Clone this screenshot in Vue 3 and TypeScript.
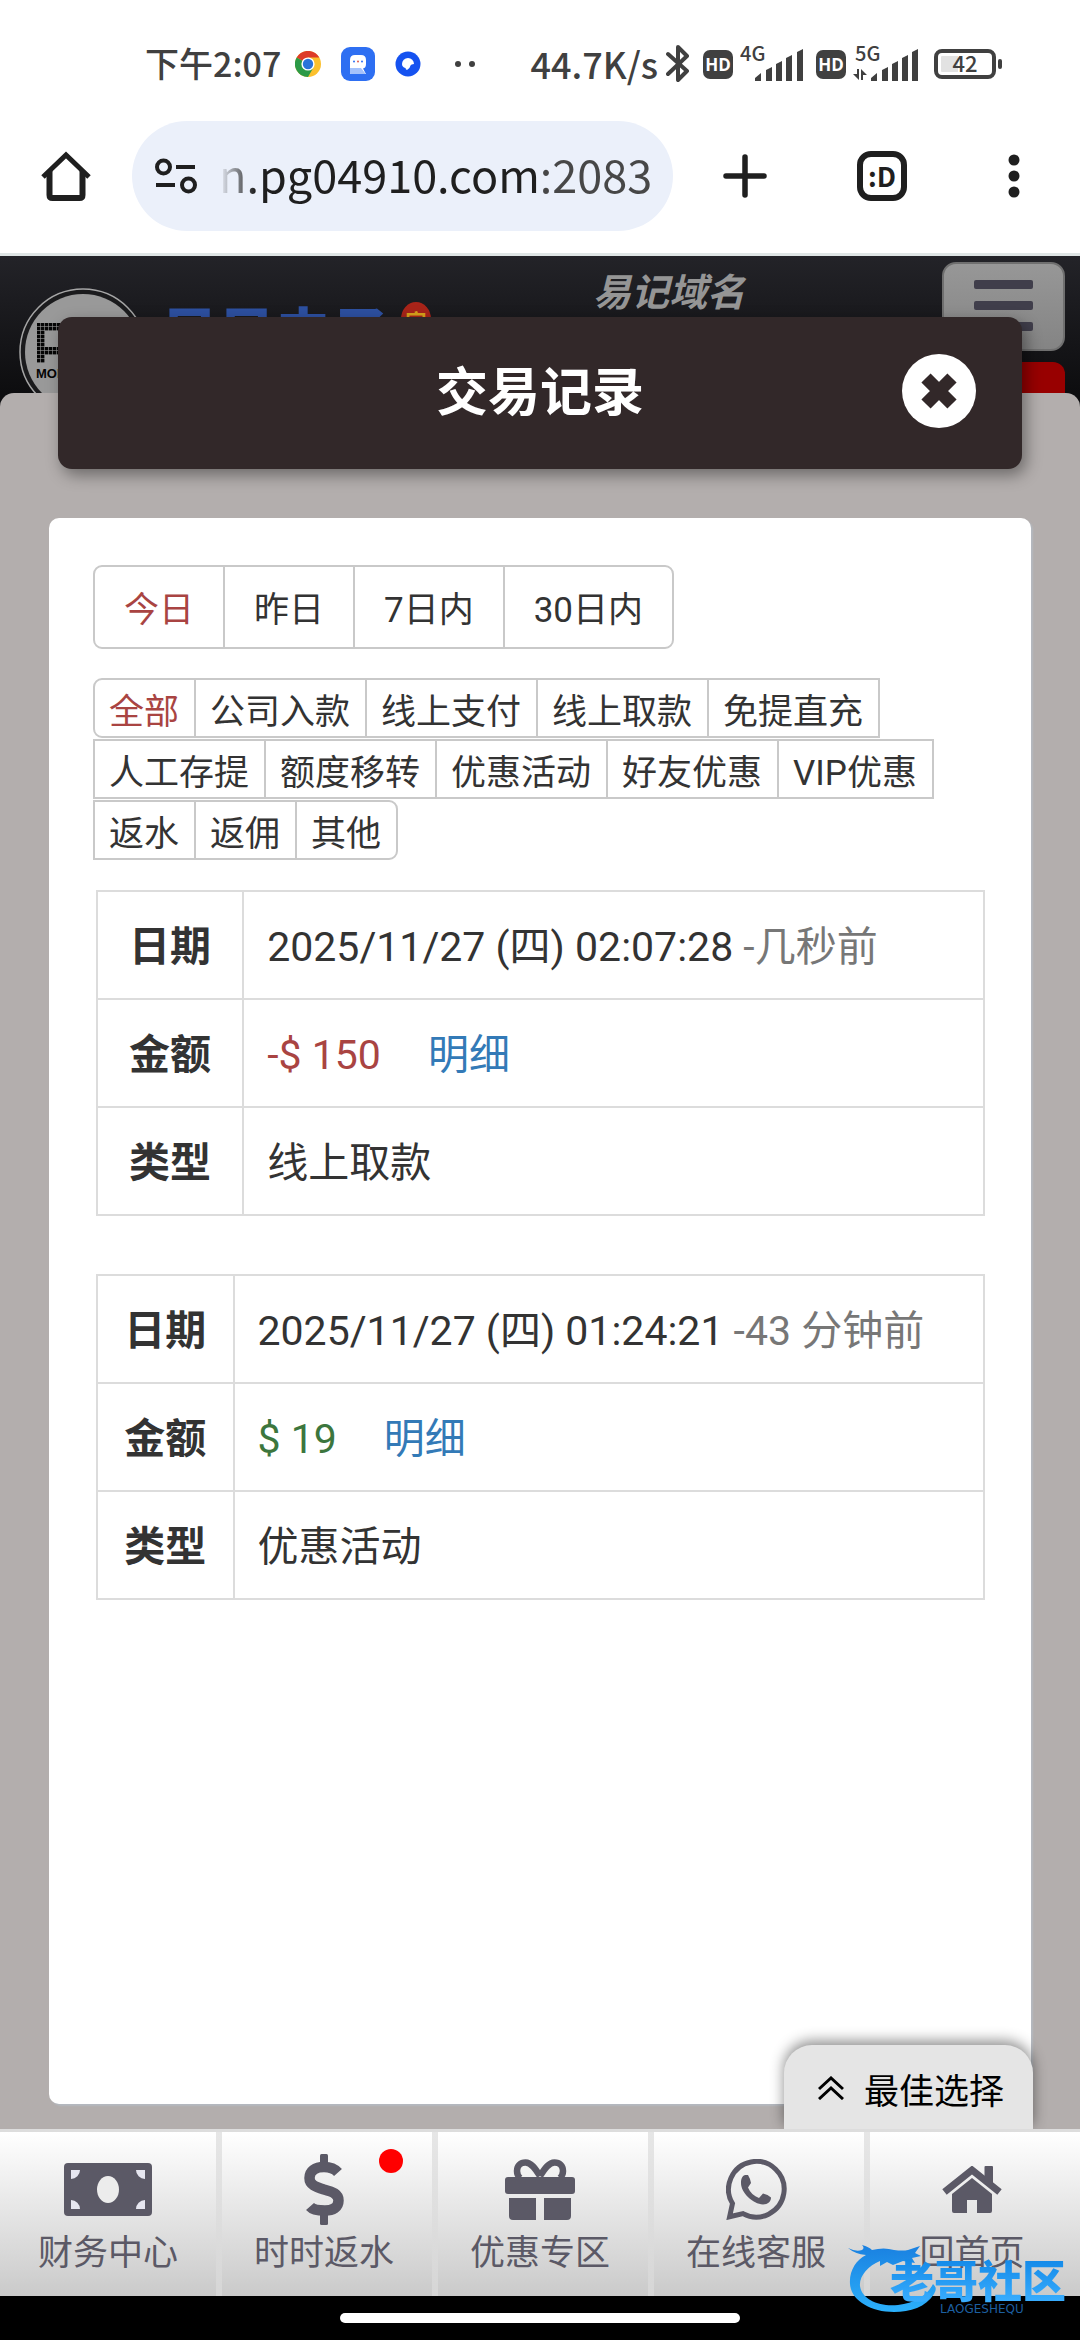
<script setup lang="ts">
import { ref } from 'vue'

interface TxRecord {
  date: string
  ago: string
  amount: string
  income: boolean
  type: string
}

const address = ref('n.pg04910.com:2083')
const ranges: string[] = ['今日', '昨日', '7日内', '30日内']
const activeRange = ref('今日')
const typeRows: string[][] = [
  ['全部', '公司入款', '线上支付', '线上取款', '免提直充'],
  ['人工存提', '额度移转', '优惠活动', '好友优惠', 'VIP优惠'],
  ['返水', '返佣', '其他'],
]
const activeType = ref('全部')
const records: TxRecord[] = [
  { date: '2025/11/27 (四) 02:07:28', ago: '-几秒前', amount: '-$ 150', income: false, type: '线上取款' },
  { date: '2025/11/27 (四) 01:24:21', ago: '-43 分钟前', amount: '$ 19', income: true, type: '优惠活动' },
]
const nav: { icon: string; label: string; dot?: boolean }[] = [
  { icon: 'money', label: '财务中心' },
  { icon: 'dollar', label: '时时返水', dot: true },
  { icon: 'gift', label: '优惠专区' },
  { icon: 'chat', label: '在线客服' },
  { icon: 'home', label: '回首页' },
]
</script>

<template>
  <div class="screen">
    <header class="status">
      <div class="status-left">
        <span class="clock">下午2:07</span>
        <svg class="ic-chrome" width="26" height="26" viewBox="0 0 26 26">
          <circle cx="13" cy="13" r="13" fill="#fbc02d" />
          <path d="M13 13 L1.7 6.5 A13 13 0 0 1 24.3 6.5 L13 6.5Z" fill="#dd3b2a" />
          <path d="M13 13 L1.7 6.5 A13 13 0 0 0 13 26 L18.6 16.2Z" fill="#2c9a47" />
          <circle cx="13" cy="13" r="6.6" fill="#fff" />
          <circle cx="13" cy="13" r="5.2" fill="#2a73d9" />
        </svg>
        <svg class="ic-app" width="34" height="34" viewBox="0 0 34 34">
          <rect width="34" height="34" rx="9" fill="#2e6ff2" />
          <path d="M9 13 q0-5 5-5 h6 q5 0 5 5 v4 q0 4-3 4.500 l3 5.500 H10 Q9 27 9 26z" fill="#fff" />
          <path d="M9 21 h11 q3 4 5 6 H10 q-1 0-1-1z" fill="#a5c2fb" />
          <circle cx="13" cy="14.500" r="1" fill="#2e6ff2" />
          <circle cx="17" cy="14.500" r="1" fill="#e2574c" />
          <circle cx="21" cy="14.500" r="1" fill="#2e6ff2" />
        </svg>
        <svg class="ic-disc" width="26" height="26" viewBox="0 0 26 26">
          <circle cx="13" cy="13" r="12.500" fill="#1552f0" />
          <path d="M7 13 a6 6 0 0 1 12 0 q-3 0-3.500 1.500 -.5 3-3.500 4.500 q-1.500-.5-1.500-2 -3.500-1-3.500-4z" fill="#fff" />
        </svg>
        <svg class="ic-dots" width="20" height="8" viewBox="0 0 20 8">
          <circle cx="3" cy="4" r="3" fill="#404040" />
          <circle cx="17" cy="4" r="3" fill="#404040" />
        </svg>
      </div>
      <div class="status-right">
        <span class="speed">44.7K/s</span>
        <svg class="ic-bt" width="24" height="40" viewBox="0 0 24 40">
          <path d="M2 10 L21 27 L12 36 V3 L21 12 L2 30" fill="none" stroke="#404040" stroke-width="4" stroke-linejoin="round" stroke-linecap="round" />
        </svg>
        <span class="hd">HD</span>
        <svg class="ic-signal" width="64" height="50" viewBox="0 0 64 50">
          <text x="0" y="22" class="gen">4G</text>
          <path d="M15 42 v-3 l6-5 v8z M26 42 V31 l6-3 v14z M36 42 V25 l6-3 v20z M46 42 V19 l6-3 v26z M57 42 V13 l6-3 v32z" fill="#404040" />
        </svg>
        <span class="hd">HD</span>
        <svg class="ic-signal" width="66" height="50" viewBox="0 0 66 50">
          <text x="2" y="22" class="gen">5G</text>
          <path d="M0 35 h4 v-5 h2 v11z M8 41 V30 l6 6 h-4 v5z" fill="#404040" />
          <path d="M18 42 v-3 l6-5 v8z M29 42 V31 l6-3 v14z M39 42 V25 l6-3 v20z M49 42 V19 l6-3 v26z M59 42 V13 l6-3 v32z" fill="#404040" />
        </svg>
        <svg class="ic-battery" width="69" height="40" viewBox="0 0 69 40">
          <rect x="2" y="7" width="58" height="26" rx="6" fill="#fff" stroke="#404040" stroke-width="4" />
          <path d="M8 12 h16 v16 h-16 q-1 0-1-1 V13 q0-1 1-1z" fill="#e2e2e2" />
          <rect x="64" y="15" width="4" height="10" rx="2" fill="#404040" />
          <text x="31" y="28" class="batt">42</text>
        </svg>
      </div>
    </header>

    <div class="toolbar">
      <button class="tool" aria-label="主页">
        <svg width="50" height="50" viewBox="0 0 50 50" fill="none" stroke="#1f1f1f" stroke-width="6">
          <path d="M2 26 L25 4 L48 26" stroke-width="5" />
          <path d="M8.500 20 V44 q0 3 3 3 H38.500 q3 0 3-3 V20" />
        </svg>
      </button>
      <label class="omnibox">
        <svg width="42" height="36" viewBox="0 0 42 36" fill="none" stroke="#1f1f1f" stroke-width="4">
          <circle cx="8.500" cy="9" r="6.500" />
          <path d="M21 9 H40 M1 27 H20" />
          <circle cx="33.500" cy="27" r="6.500" />
        </svg>
        <input v-model="address" class="url" type="text" aria-label="网址" />
      </label>
      <button class="tool plus" aria-label="新标签页">
        <svg width="44" height="44" viewBox="0 0 44 44" stroke="#1f1f1f" stroke-width="5.500" stroke-linecap="round">
          <path d="M22 3 V41 M3 22 H41" />
        </svg>
      </button>
      <button class="tool tabs" aria-label="标签页">:D</button>
      <button class="tool more" aria-label="更多">
        <svg width="12" height="44" viewBox="0 0 12 44" fill="#1f1f1f">
          <circle cx="6" cy="6" r="5.500" /><circle cx="6" cy="22" r="5.500" /><circle cx="6" cy="38" r="5.500" />
        </svg>
      </button>
    </div>

    <main class="site">
      <div class="backdrop">
        <div class="masthead">
          <svg class="logo" width="128" height="128" viewBox="0 0 128 128">
            <defs>
              <pattern id="px" x="18" y="35" width="4" height="4" patternUnits="userSpaceOnUse">
                <rect width="3.400" height="3.400" fill="#050505" />
              </pattern>
            </defs>
            <circle cx="64" cy="64" r="63" fill="#1b1b1d" stroke="#a5a5a5" stroke-width="1.500" />
            <circle cx="64" cy="64" r="58" fill="#999" />
            <path d="M18 35 H50 V67 H26 V75 H18Z M26 43 V59 H42 V43Z" fill="url(#px)" fill-rule="evenodd" />
            <text x="17" y="90" font-family="Liberation Sans, sans-serif" font-weight="700" font-size="13" fill="#050505">MOBILE</text>
          </svg>
          <span class="brand">贝贝电子</span>
          <span class="seal">官</span>
          <span class="slogan">易记域名</span>
          <div class="side">
            <button class="burger" aria-label="菜单"><i></i><i></i><i></i></button>
            <div class="red-tab"></div>
          </div>
        </div>
        <div class="sheet"></div>
      </div>

      <section class="modal">
        <div class="title-bar">
          <h1>交易记录</h1>
          <button class="close" aria-label="关闭">
            <svg width="74" height="74" viewBox="0 0 74 74">
              <circle cx="37" cy="37" r="37" fill="#fff" />
              <path d="M24 24 L50 50 M50 24 L24 50" stroke="#322829" stroke-width="13" />
            </svg>
          </button>
        </div>

        <div class="panel">
          <div class="ranges">
            <button v-for="r in ranges" :key="r" :class="{ on: r === activeRange }" @click="activeRange = r">{{ r }}</button>
          </div>
          <div class="types">
            <div v-for="(row, i) in typeRows" :key="i" class="type-row">
              <button v-for="t in row" :key="t" :class="{ on: t === activeType }" @click="activeType = t">{{ t }}</button>
            </div>
          </div>
          <table v-for="rec in records" :key="rec.date" class="record">
            <tbody>
              <tr><th scope="row">日期</th><td>{{ rec.date }} <span class="ago">{{ rec.ago }}</span></td></tr>
              <tr>
                <th scope="row">金额</th>
                <td><span :class="rec.income ? 'gain' : 'loss'">{{ rec.amount }}</span><a href="#" class="detail">明细</a></td>
              </tr>
              <tr><th scope="row">类型</th><td>{{ rec.type }}</td></tr>
            </tbody>
          </table>
        </div>
      </section>

      <button class="best">
        <svg width="26" height="24" viewBox="0 0 26 24" fill="none" stroke="#000" stroke-width="3">
          <path d="M1 13 L13 2 L25 13 M1 23 L13 12 L25 23" />
        </svg>
        最佳选择
      </button>
    </main>

    <nav class="bottom">
      <a v-for="n in nav" :key="n.label" href="#" class="nav-item">
        <span class="nav-icon">
          <svg v-if="n.icon === 'money'" width="88" height="53" viewBox="0 0 88 53">
            <rect width="88" height="53" rx="4" fill="#5b5966" />
            <ellipse cx="44" cy="26.500" rx="11" ry="13.500" fill="#ececec" />
            <path d="M7 7 h9 a9 9 0 0 1 -9 9z M81 7 v9 a9 9 0 0 1 -9 -9z M7 46 v-9 a9 9 0 0 1 9 9z M81 46 h-9 a9 9 0 0 1 9 -9z" fill="#e6e6f0" />
          </svg>
          <svg v-else-if="n.icon === 'dollar'" width="40" height="71" viewBox="0 0 40 71">
            <rect x="16" width="8" height="14" rx="1.500" fill="#5b5966" />
            <rect x="16" y="57" width="8" height="14" rx="1.500" fill="#5b5966" />
            <path d="M34 18.500 C30 14 25 13 20 13 C11 13 5.500 17 5.500 24 C5.500 31 12 33 20 35.500 C29 38 34.500 40 34.500 46.500 C34.500 53.500 29 56.500 21 56.500 C14 56.500 9 56 6 52.500" fill="none" stroke="#5b5966" stroke-width="10.500" />
          </svg>
          <svg v-else-if="n.icon === 'gift'" width="70" height="61" viewBox="0 0 70 61" fill="#5b5966">
            <rect y="18" width="70" height="17" rx="3" />
            <path d="M4 39 H31 V61 H8 q-4 0-4-4z M39 39 H66 V57 q0 4-4 4 H39z" />
            <path d="M35 17 C30 9 26 3.500 20.500 3.500 C15.500 3.500 12 7 12 12 C12 15 13 17 15 19 M35 17 C40 9 44 3.500 49.500 3.500 C54.500 3.500 58 7 58 12 C58 15 57 17 55 19" fill="none" stroke="#5b5966" stroke-width="6.500" />
          </svg>
          <svg v-else-if="n.icon === 'chat'" width="61" height="61" viewBox="0 0 61 61" fill="#5b5966">
            <path d="M17 54.600 A27.800 27.800 0 1 0 6.500 44.500 L3.600 57.800 Z" fill="none" stroke="#5b5966" stroke-width="5" />
            <path d="M15 24 c0-4 1-7 4-8 h3 q2 3 3 8 l-3 4.500 c2 5 6 8.500 11 10.500 l4-4.500 q5 1 8 4 c0 4-3 7-8 7 C27 45 15 34 15 24z" />
          </svg>
          <svg v-else width="60" height="47" viewBox="0 0 60 47" fill="#5b5966">
            <path d="M2.500 26 L30 4 L57.500 26" fill="none" stroke="#5b5966" stroke-width="7" />
            <rect x="42.500" width="8.500" height="18" rx="1" />
            <path d="M10 28 L30 12 L50 28 V45 q0 2-2 2 H35 V34 H25 V47 H12 q-2 0-2-2z" />
          </svg>
          <i v-if="n.dot" class="dot"></i>
        </span>
        <span class="nav-label">{{ n.label }}</span>
      </a>
    </nav>

    <footer class="gesture"><span class="handle"></span></footer>

    <div class="watermark">
      <svg class="dragon" width="92" height="70" viewBox="0 0 92 70">
        <defs>
          <linearGradient id="wm" x1="0" y1="0" x2="0" y2="1">
            <stop offset="0" stop-color="#1a80e0" /><stop offset="1" stop-color="#2bb0fb" />
          </linearGradient>
        </defs>
        <path d="M0 4 q8 4 14 2 q3-2 0-5 q7 2 10 5 q12-3 22 0 q9 1 14 0 l12-4 -5 7 6 3 -9 2 3 5 -12-2 -10 4 -6-3 -7 4 0-5 C20 22 11 32 12 42 C14 56 32 63 50 61 C67 59 79 52 85 40 q5 4 1 10 C78 63 62 68 46 68 C22 68 3 56 2 40 C1 27 8 16 18 11 Q7 10 0 4z" fill="url(#wm)" />
      </svg>
      <div class="wm-text">
        <span class="wm-cn">老哥社区</span>
        <span class="wm-en">LAOGESHEQU</span>
      </div>
    </div>
  </div>
</template>

<style>
body {
  background: #000;
}
</style>

<style scoped>
.screen {
  position: relative;
  display: flex;
  flex-direction: column;
  min-height: 100vh;
  background: #fff;
  color: #333;
  font-family: Roboto, 'Noto Sans CJK SC', sans-serif;
  overflow: hidden;
}
button {
  padding: 0;
  border: 0;
  background: none;
  color: inherit;
  font: inherit;
  cursor: pointer;
}
svg {
  display: block;
  flex: none;
}
.status {
  display: flex;
  justify-content: space-between;
  align-items: flex-start;
  height: 121px;
  box-sizing: border-box;
  padding: 8px 77px 0 145px;
  color: #404040;
  font: 500 34px/110px 'Noto Sans CJK SC', sans-serif;
}
.status-left,
.status-right {
  display: flex;
  align-items: center;
  height: 112px;
}
.clock,
.speed {
  flex: none;
  padding-bottom: 2px;
}
.speed {
  font-size: 36px;
}
.ic-chrome {
  margin-left: 14px;
}
.ic-app {
  margin-left: 20px;
}
.ic-disc {
  margin-left: 20px;
}
.ic-dots {
  margin-left: 34px;
}
.ic-bt {
  margin: 0 13px 0 8px;
}
.hd {
  width: 30px;
  height: 29px;
  border-radius: 7px;
  background: #404040;
  color: #fff;
  text-align: center;
  font: 700 17px/29px 'Open Sans', sans-serif;
}
.ic-signal {
  margin: 0 12px 0 7px;
}
.ic-battery {
  margin-left: 3px;
}
.gen {
  font: 500 20px 'Noto Sans CJK SC', sans-serif;
  fill: #404040;
}
.batt {
  font: 500 22px 'Noto Sans CJK SC', sans-serif;
  fill: #404040;
  text-anchor: middle;
}
.toolbar {
  display: flex;
  align-items: flex-start;
  height: 132px;
  padding: 0 60px 0 41px;
  border-bottom: 3px solid #dfe5e5;
}
.tool {
  display: flex;
  flex: none;
  align-items: center;
  justify-content: center;
  height: 110px;
}
.omnibox {
  display: flex;
  flex: 1;
  align-items: center;
  gap: 22px;
  min-width: 0;
  height: 110px;
  margin-left: 41px;
  padding: 0 16px 0 23px;
  box-sizing: border-box;
  border-radius: 55px;
  background: #ebf0fa;
}
.url {
  flex: 1;
  min-width: 0;
  padding: 0 0 4px;
  border: 0;
  outline: 0;
  background: linear-gradient(90deg, transparent 0, #1f1f1f 36px, #1f1f1f 317px, #474747 318px);
  -webkit-background-clip: text;
  background-clip: text;
  color: transparent;
  font: 400 45px/66px 'Noto Sans CJK SC', sans-serif;
}
.plus {
  margin-left: 50px;
}
.tabs {
  width: 50px;
  height: 50px;
  margin: 30px 0 0 90px;
  box-sizing: border-box;
  border: 6px solid #1f1f1f;
  border-radius: 14px;
  color: #1f1f1f;
  font: 700 27px/30px 'Noto Sans CJK SC', sans-serif;
}
.more {
  margin-left: 101px;
}
.site {
  position: relative;
  display: flex;
  flex: 1;
  flex-direction: column;
}
.backdrop {
  position: absolute;
  inset: 0;
  display: flex;
  flex-direction: column;
}
.masthead {
  display: flex;
  align-items: flex-start;
  height: 160px;
  padding: 0 15px 0 19px;
  background: linear-gradient(#232328, #0d0d0f 137px);
}
.logo {
  margin-top: 32px;
}
.brand {
  margin: 42px 0 0 14px;
  color: #2d50a0;
  font: 900 57px/64px 'Noto Sans CJK SC', sans-serif;
}
.seal {
  width: 30px;
  height: 34px;
  margin: 46px 0 0 12px;
  border-radius: 50%;
  background: #a82419;
  color: #d9a21b;
  text-align: center;
  font: 700 21px/36px 'Noto Sans CJK SC', sans-serif;
}
.slogan {
  margin: 6px 0 0 162px;
  color: #959595;
  font: italic 700 38px/56px 'Noto Sans CJK SC', sans-serif;
}
.side {
  display: flex;
  flex-direction: column;
  gap: 11px;
  width: 123px;
  margin: 6px 0 0 auto;
}
.burger {
  display: flex;
  flex-direction: column;
  align-items: center;
  gap: 12px;
  height: 89px;
  padding-top: 16px;
  box-sizing: border-box;
  border: 2px solid #6f6f6f;
  border-radius: 14px;
  background: linear-gradient(#979797, #848484);
}
.burger i {
  width: 59px;
  height: 9px;
  border-radius: 2px;
  background: #403e4b;
}
.red-tab {
  height: 44px;
  border-radius: 12px 12px 0 0;
  background: #980000;
}
.sheet {
  position: relative;
  flex: 1;
  margin-top: -23px;
  border-radius: 14px 14px 0 0;
  background: #b3aead;
}
.modal {
  position: relative;
  display: flex;
  flex: 1;
  flex-direction: column;
  padding: 61px 49px 25px;
}
.title-bar {
  display: flex;
  align-items: center;
  justify-content: flex-end;
  height: 148px;
  margin: 0 9px 49px;
  padding: 0 46px 4px 0;
  border-radius: 14px;
  background: #322829;
  box-shadow: 4px 6px 16px rgba(0, 0, 0, 0.4);
}
h1 {
  flex: 1;
  margin: 0;
  padding: 0 0 4px 120px;
  color: #fff;
  text-align: center;
  font: 700 52px/72px 'Noto Sans CJK SC', sans-serif;
}
.panel {
  flex: 1;
  padding: 47px 46px 40px 44px;
  border-radius: 10px;
  background: #fff;
  box-shadow: 2px 2px 2px rgba(180, 188, 196, 0.8);
}
.ranges,
.type-row {
  display: flex;
}
.ranges button,
.type-row button {
  margin-right: -2px;
  border: 2px solid #c9c9c9;
  background: #fff;
  font-size: 35px;
}
.ranges button {
  height: 84px;
  padding: 0 29px 2px;
}
.ranges button:first-child {
  border-radius: 9px 0 0 9px;
}
.ranges button:last-child {
  border-radius: 0 9px 9px 0;
}
.types {
  display: flex;
  flex-direction: column;
  gap: 1px;
  margin: 29px 0 30px;
}
.type-row button {
  height: 60px;
  padding: 0 15px 0 14px;
}
.type-row:first-child button:first-child {
  border-radius: 9px 0 0 9px;
}
.type-row:last-child button:last-child {
  border-radius: 0 9px 9px 0;
}
.record {
  width: calc(100% - 3px);
  margin: 0 0 58px 3px;
  border-collapse: collapse;
  font-size: 41px;
  line-height: 58px;
}
.ranges .on,
.type-row .on {
  color: #a94442;
}
.record th,
.record td {
  height: 58px;
  padding: 26px 23px 22px;
  border: 2px solid #dcdcdc;
  text-align: left;
  white-space: nowrap;
}
.record th {
  text-align: center;
  font-weight: 700;
}
.ago {
  color: #777;
}
.loss {
  color: #a94442;
}
.gain {
  color: #3c763d;
}
.detail {
  margin-left: 47px;
  color: #337ab7;
  text-decoration: none;
}
.best {
  position: absolute;
  right: 47px;
  bottom: 0;
  display: flex;
  align-items: center;
  gap: 20px;
  height: 84px;
  padding: 2px 29px 0 34px;
  border-radius: 28px 28px 0 0;
  background: #e5e5e5;
  box-shadow: 0 -4px 14px rgba(0, 0, 0, 0.45);
  color: #000;
  font-size: 35px;
  clip-path: inset(-30px -30px 0 -30px);
}
.bottom {
  display: flex;
  border-top: 3px solid #ddd;
  background: linear-gradient(#fff, #cacaca);
}
.nav-item {
  display: flex;
  flex: 1;
  flex-direction: column;
  align-items: center;
  height: 164px;
  color: #5b5966;
  text-decoration: none;
}
.nav-item + .nav-item {
  background: linear-gradient(#e6e6e6, #dedede 50%, #d6d6d6) left / 6px 100% no-repeat;
}
.nav-icon {
  position: relative;
  display: flex;
  align-items: center;
  justify-content: center;
  width: 100%;
  height: 71px;
  margin-top: 22px;
}
.dot {
  position: absolute;
  top: -5px;
  right: 29px;
  width: 24px;
  height: 24px;
  border-radius: 50%;
  background: #f00;
}
.nav-label {
  font-size: 35px;
  line-height: 58px;
}
.gesture {
  display: flex;
  justify-content: center;
  height: 27px;
  padding-top: 17px;
  background: #000;
}
.handle {
  width: 37%;
  height: 10px;
  border-radius: 5px;
  background: #fff;
}
.watermark {
  position: absolute;
  right: 14px;
  bottom: 25px;
  display: flex;
  pointer-events: none;
}
.dragon {
  margin-right: -50px;
}
.wm-text {
  display: flex;
  flex-direction: column;
  align-items: flex-start;
  padding-top: 11px;
}
.wm-cn {
  background: linear-gradient(#0f86e6, #3aaeff);
  -webkit-background-clip: text;
  background-clip: text;
  color: transparent;
  font: 900 44px/48px 'Noto Sans CJK SC', sans-serif;
}
.wm-en {
  margin-left: 50px;
  color: #1c5fa0;
  font: 400 12px/12px 'DejaVu Sans', sans-serif;
}
</style>
